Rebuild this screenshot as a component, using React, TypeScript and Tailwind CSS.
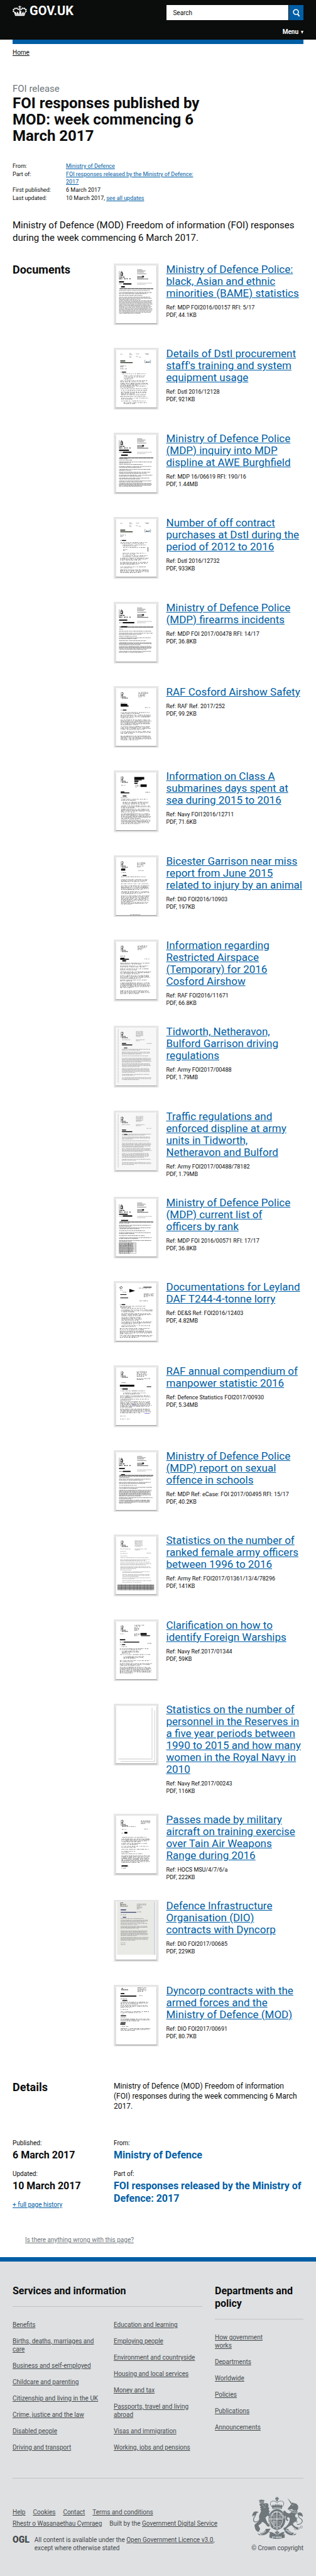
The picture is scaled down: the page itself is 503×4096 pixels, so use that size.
import React from "react";

type Bar = [x: number, y: number, w: number, h: number];
type Block = [x: number, y: number, w: number, lines: number, pitch?: number];
type Style = "typed" | "broken" | "fine";

interface Art {
  style: Style;
  paper?: string;
  bars?: Bar[];
  blocks?: Block[];
  extra?: React.ReactNode;
}

interface Doc {
  title: string;
  reference: string;
  size: string;
  art: Art;
}

function makeRandom(seed: number) {
  let s = seed * 7919 + 17;
  return () => {
    s = (s * 16807) % 2147483647;
    return s / 2147483647;
  };
}

function textPath(blocks: Block[], style: Style, seed: number) {
  const rnd = makeRandom(seed);
  const gap = style === "broken" ? 2.2 : 0.8;
  let d = "";
  for (const [x, y, w, lines, pitch = 2.3] of blocks) {
    for (let i = 0; i < lines; i++) {
      const ragged = i === lines - 1 && lines > 1 ? 0.35 + rnd() * 0.5 : 0.93 + rnd() * 0.07;
      const end = x + w * ragged;
      let cx = x;
      while (cx < end) {
        const word = Math.min(end - cx, 0.8 + rnd() * (style === "broken" ? 3 : 4.5));
        d += `M${cx.toFixed(1)} ${(y + i * pitch).toFixed(1)}h${word.toFixed(1)}`;
        cx += word + 0.4 + rnd() * gap;
      }
    }
  }
  return d;
}

const inkWidth: Record<Style, number> = { typed: 1, broken: 0.85, fine: 0.6 };
const inkOpacity: Record<Style, number> = { typed: 0.72, broken: 0.9, fine: 0.75 };

function Thumbnail({ art, seed }: { art: Art; seed: number }) {
  return (
    <svg viewBox="0 0 109 150" className="block h-auto w-full" aria-hidden="true">
      <rect width="109" height="150" fill="#e6e6e6" />
      <rect x="4" y="7" width="101" height="140" fill="#000" opacity="0.1" />
      <rect x="5" y="6.5" width="99" height="140" fill="#000" opacity="0.3" />
      <rect x="5" y="5" width="99" height="140" fill={art.paper ?? "#fff"} />
      {art.extra}
      <path
        d={textPath(art.blocks ?? [], art.style, seed)}
        stroke="#000"
        strokeWidth={inkWidth[art.style]}
        opacity={inkOpacity[art.style]}
      />
      {art.bars?.map(([x, y, w, h], i) => (
        <rect key={i} x={x} y={y} width={w} height={h} fill="#000" />
      ))}
    </svg>
  );
}

const policeHeader = (
  <g>
    <path d="M13.5 18v21" stroke="#555" strokeWidth="0.8" />
    <path
      d="M17 21l2-2 2 2M16 25c0-3 6-3 6 0s-6 4-5 1M16 29h7M18 22h3v7"
      fill="none"
      stroke="#111"
      strokeWidth="1.4"
    />
    <path d="M15 33h2m1 0h3m2 0h3M14 37h4m1 0h2m4 0h4m2 0h3m4 0h3" stroke="#000" strokeWidth="1.6" />
    <path d="M57 15h12M57 18h20M57 21h16M57 25h22" stroke="#333" strokeWidth="1" strokeDasharray="3 0.4" />
    <path d="M57 31.5h12M57 34.5h15M57 37.5h27" stroke="#222" strokeWidth="1.2" strokeDasharray="4 0.3" />
    <rect x="69" y="30" width="4.5" height="3" />
    <path d="M57 47.5h36M57 50.5h20" stroke="#777" strokeWidth="0.8" strokeDasharray="3 0.5" />
  </g>
);

const police = (nameBars: Bar[], blocks: Block[], extra?: React.ReactNode): Art => ({
  style: "typed",
  bars: nameBars,
  blocks,
  extra: (
    <>
      {policeHeader}
      <path d="M14 61h82" stroke="#111" strokeWidth="1.5" strokeDasharray="9 0.4" />
      {extra}
    </>
  ),
});

const dstlHeader = (
  <g>
    <path
      d="M16 15.500h5M38 14h5m-5 2.500h7M54 15h8M76 14.500h9m-6 1.500h6M38 21h4m-3 2.500h4M54 21h5m2 2h5"
      stroke="#555"
      strokeWidth="0.9"
      strokeDasharray="2 0.7"
    />
    <path d="M77 30h-1.500v7H77M88 30h1.500v7H88" fill="none" stroke="#555" strokeWidth="0.7" />
    <text x="77.500" y="36" fontSize="6" fontWeight="700" fill="#1d5060" fontFamily="Roboto, sans-serif">
      dstl
    </text>
    <path d="M16 32h12M16 36h30" stroke="#15200f" strokeWidth="2" />
  </g>
);

const crestHeader = (
  <g stroke="#000" fill="none">
    <path d="M18 15v14" strokeWidth="0.6" />
    <path d="M19 17l2-2 2 2-1 4h-3M19 23h4" strokeWidth="1.2" />
    <path d="M20 26h9M20 29h15" strokeWidth="1.3" strokeDasharray="3 0.7" />
  </g>
);

const grainyScan = (
  <g>
    <rect x="5" y="5" width="99" height="140" fill="#f7f7f7" />
    <path d="M11 8v130" stroke="#ccc" strokeWidth="1.5" strokeDasharray="7 0.8" />
    <path d="M8 20v115" stroke="#eee" strokeWidth="1" />
    {crestHeader}
  </g>
);

const garrisonBlocks: Block[] = [
  [54, 14, 18, 6, 2.4],
  [20, 34, 20, 1],
  [54, 34, 22, 2, 2.5],
  [80, 43, 12, 1],
  [20, 57, 72, 2],
  [20, 64, 70, 3],
  [20, 73, 66, 1],
  [20, 79, 72, 5],
  [20, 92, 72, 4],
  [20, 104, 68, 5],
  [20, 118, 70, 2],
  [20, 126, 72, 3],
];

const docs: Doc[] = [
  {
    title: "Ministry of Defence Police: black, Asian and ethnic minorities (BAME) statistics",
    reference: "MDP FOI2016/00157 RFI: 5/17",
    size: "PDF, 44.1KB",
    art: police(
      [[13, 43, 12, 3], [23, 48, 20, 3], [18, 55, 9, 3]],
      [[13, 49, 8, 1], [13, 65.5, 76, 1], [13, 70.5, 82, 2], [13, 77, 60, 1], [13, 81.5, 80, 3, 2.8], [13, 90, 82, 12, 2.8]],
    ),
  },
  {
    title: "Details of Dstl procurement staff's training and system equipment usage",
    reference: "Dstl 2016/12128",
    size: "PDF, 921KB",
    art: {
      style: "broken",
      extra: dstlHeader,
      bars: [[20, 58, 10, 2]],
      blocks: [
        [16, 44, 16, 2], [16, 51, 17, 1], [16, 59, 4, 1], [20, 63, 60, 1], [25, 68, 52, 3, 2.7], [24, 76, 20, 1],
        [16, 80, 70, 2], [16, 86, 70, 3], [16, 93, 68, 2], [16, 99, 66, 1], [18, 103, 66, 1], [18, 107, 66, 3],
        [18, 114, 62, 1], [16, 118, 66, 1], [18, 122, 68, 2], [18, 129, 62, 1], [24, 133, 58, 2],
      ],
    },
  },
  {
    title: "Ministry of Defence Police (MDP) inquiry into MDP displine at AWE Burghfield",
    reference: "MDP 16/06619 RFI: 190/16",
    size: "PDF, 1.44MB",
    art: police(
      [[13, 41, 24, 3], [22, 46, 21, 3], [18, 53, 16, 3]],
      [
        [13, 47, 8, 1], [13, 63, 22, 1], [13, 66.5, 34, 1], [13, 71, 82, 2], [13, 77, 60, 1], [13, 82, 80, 2],
        [13, 89, 80, 2], [13, 96, 80, 2], [13, 103, 82, 2], [13, 110, 78, 2], [13, 117, 82, 2], [13, 123, 82, 4],
      ],
    ),
  },
  {
    title: "Number of off contract purchases at Dstl during the period of 2012 to 2016",
    reference: "Dstl 2016/12732",
    size: "PDF, 933KB",
    art: {
      style: "broken",
      extra: (
        <>
          {dstlHeader}
          <path d="M83 73v11" stroke="#333" strokeWidth="1.2" />
        </>
      ),
      bars: [[20, 56, 10, 2]],
      blocks: [
        [16, 44, 14, 2, 3], [16, 57, 4, 1], [17, 62, 66, 2], [22, 68, 60, 2], [23, 74, 56, 1], [23, 79, 10, 2],
        [22, 88, 60, 2], [22, 94, 66, 2], [16, 100, 70, 3], [16, 110, 70, 3], [16, 121, 66, 2], [16, 128, 70, 4],
      ],
    },
  },
  {
    title: "Ministry of Defence Police (MDP) firearms incidents",
    reference: "MDP FOI 2017/00478 RFI: 14/17",
    size: "PDF, 36.8KB",
    art: police(
      [[13, 43, 20, 2.5], [22, 49, 28, 3], [18, 59, 15, 2.5]],
      [
        [13, 50.5, 8, 1], [13, 66, 10, 1], [13, 71, 80, 1], [13, 76, 82, 2], [13, 83, 44, 1], [13, 87, 80, 2],
        [13, 94, 66, 1], [13, 99, 80, 3], [13, 108, 80, 4], [13, 120, 82, 2],
      ],
    ),
  },
  {
    title: "RAF Cosford Airshow Safety",
    reference: "RAF Ref. 2017/252",
    size: "PDF, 99.2KB",
    art: {
      style: "broken",
      extra: crestHeader,
      bars: [[17, 43, 16, 4], [17, 47, 19, 2.5], [22, 57, 9, 2]],
      blocks: [
        [60, 15, 24, 3], [60, 22, 16, 3], [17, 41, 12, 1], [76, 52, 12, 1], [17, 58, 4, 1], [17, 64, 72, 2],
        [17, 70, 74, 4], [17, 82, 76, 6], [17, 98, 74, 4], [17, 110, 76, 3], [17, 121, 76, 5],
      ],
    },
  },
  {
    title: "Information on Class A submarines days spent at sea during 2015 to 2016",
    reference: "Navy FOI12016/12711",
    size: "PDF, 71.6KB",
    art: {
      style: "broken",
      extra: crestHeader,
      bars: [[50, 16, 24, 6], [50, 22, 18, 2], [50, 25, 10, 3], [50, 30, 8, 2.5], [65, 34, 15, 6], [17, 51, 9, 2], [17, 53.5, 21, 2], [22, 61, 9, 2]],
      blocks: [
        [18, 36, 12, 1], [53, 36, 10, 3], [77, 53, 12, 1], [17, 66, 16, 1], [18, 70, 70, 2], [22, 77, 66, 3],
        [18, 86, 72, 3], [18, 94, 72, 4], [18, 105, 74, 6], [18, 120, 72, 5],
      ],
    },
  },
  {
    title: "Bicester Garrison near miss report from June 2015 related to injury by an animal",
    reference: "DIO FOI2016/10903",
    size: "PDF, 197KB",
    art: {
      style: "broken",
      extra: crestHeader,
      bars: [[18, 32, 10, 5], [22, 48, 9, 2]],
      blocks: [
        [57, 18, 20, 3], [57, 26, 16, 2], [60, 37, 14, 1], [18, 42, 12, 1], [18, 52, 62, 1], [18, 59, 68, 3],
        [18, 69, 66, 1], [18, 74, 68, 5], [18, 88, 72, 3], [18, 98, 70, 7], [18, 114, 68, 3], [40, 144, 26, 1],
      ],
    },
  },
  {
    title: "Information regarding Restricted Airspace (Temporary) for 2016 Cosford Airshow",
    reference: "RAF FOI2016/11671",
    size: "PDF, 66.8KB",
    art: {
      style: "broken",
      extra: crestHeader,
      bars: [[16, 44, 10, 4], [16, 46.5, 21, 2.5], [21, 50, 9, 3]],
      blocks: [
        [58, 15, 24, 3], [58, 22, 13, 2], [16, 40, 12, 1], [75, 47, 12, 1], [16, 57, 72, 2], [16, 64, 72, 2],
        [16, 71, 74, 2], [16, 78, 74, 3], [16, 87, 74, 4], [16, 98, 66, 2], [16, 105, 74, 6], [16, 124, 72, 4],
      ],
    },
  },
  {
    title: "Tidworth, Netheravon, Bulford Garrison driving regulations",
    reference: "Army FOI2017/00488",
    size: "PDF, 1.79MB",
    art: { style: "fine", extra: grainyScan, bars: [[20, 42, 10, 2], [20, 45.5, 25, 2], [25, 53, 8, 1.5]], blocks: garrisonBlocks },
  },
  {
    title: "Traffic regulations and enforced displine at army units in Tidworth, Netheravon and Bulford",
    reference: "Army FOI2017/00488/78182",
    size: "PDF, 1.79MB",
    art: { style: "fine", extra: grainyScan, bars: [[20, 46, 10, 2], [20, 50, 25, 2], [25, 57, 8, 1.5]], blocks: garrisonBlocks },
  },
  {
    title: "Ministry of Defence Police (MDP) current list of officers\u00a0by rank",
    reference: "MDP FOI 2016/00571 RFI: 17/17",
    size: "PDF, 36.8KB",
    art: police(
      [[13, 41, 21, 2.5], [22, 45, 23, 3], [18, 56, 17, 2.5]],
      [
        [13, 47, 8, 1], [13, 64, 26, 1], [13, 69, 82, 2], [13, 75, 82, 2], [13, 82, 66, 1], [13, 87, 80, 2],
        [13, 94, 64, 1], [13, 99, 82, 2], [13, 106, 82, 2], [14, 113, 34, 10, 2.6],
      ],
      <path
        d="M13 111h41v26H13zM36 111v26M13 114h41M13 117h41M13 120h41M13 123h41M13 126h41M13 129h41M13 132h41"
        fill="none"
        stroke="#444"
        strokeWidth="0.6"
      />,
    ),
  },
  {
    title: "Documentations for Leyland DAF T244-4-tonne lorry",
    reference: "DE&S Ref: FOI2016/12403",
    size: "PDF, 4.82MB",
    art: {
      style: "broken",
      extra: (
        <>
          <path d="M15 15l4-2 2 3-3 3-3-2z" fill="none" stroke="#000" strokeWidth="1" />
          <path d="M38 19l14 4.500-14 4z" />
        </>
      ),
      bars: [[72, 14, 20, 1.5], [16, 32, 15, 1.5], [16, 40, 19, 1.5], [19, 56, 9, 2]],
      blocks: [
        [61, 17, 30, 1], [16, 22, 8, 1], [22, 27, 12, 1], [73, 31, 24, 4], [62, 48, 24, 1], [15, 57, 4, 1],
        [16, 61, 62, 2], [19, 66, 60, 1], [19, 70, 76, 3], [19, 79, 76, 3], [19, 88, 50, 4], [19, 99, 76, 3],
        [19, 108, 74, 2], [15, 115, 78, 2], [15, 121, 80, 4], [15, 132, 80, 3],
      ],
    },
  },
  {
    title: "RAF annual compendium of manpower statistic 2016",
    reference: "Defence Statistics FOI2017/00930",
    size: "PDF, 5.34MB",
    art: {
      style: "broken",
      extra: (
        <>
          {crestHeader}
          <path d="M46 96h7M75 116.500h12" stroke="#2323d0" strokeWidth="1" strokeDasharray="3 0.500" />
        </>
      ),
      bars: [[15, 47, 35, 4.5], [21, 56, 13, 2.5], [80, 51, 11, 1.5]],
      blocks: [
        [56, 15, 26, 6], [56, 32, 34, 2], [18, 42, 14, 1], [17, 57, 4, 1], [17, 62, 62, 1], [23, 67, 58, 2],
        [16, 74, 76, 3], [16, 82, 74, 2], [16, 88, 76, 7], [16, 106, 76, 5], [16, 123, 13, 1], [16, 130, 24, 1],
      ],
    },
  },
  {
    title: "Ministry of Defence Police (MDP) report on sexual offence in schools",
    reference: "MDP Ref: eCase: FOI 2017/00495 RFI: 15/17",
    size: "PDF, 40.2KB",
    art: police(
      [[13, 43, 14, 2.5], [22, 50, 19, 2.5], [18, 58, 9, 2]],
      [
        [13, 51, 8, 1], [13, 63.5, 82, 1], [13, 66, 26, 1], [13, 70, 82, 2], [13, 78, 82, 2], [13, 85, 44, 1],
        [13, 90, 82, 2], [13, 97, 80, 7], [13, 115, 82, 2], [13, 121, 80, 4],
      ],
    ),
  },
  {
    title: "Statistics on the number of ranked female army officers between 1996 to 2016",
    reference: "Army Ref: FOI2017/01361/13/4/78296",
    size: "PDF, 141KB",
    art: {
      style: "fine",
      extra: (
        <>
          {crestHeader}
          <rect x="9" y="121" width="89" height="14" fill="#aaa" />
          <path d="M9 124h89M9 128h89M9 131h89" stroke="#333" strokeWidth="0.800" />
          <path d="M19 121v14M28 121v14M39 121v14M49 121v14M57 121v14M64 121v14M74 121v14M82 121v14M90 121v14" stroke="#333" strokeWidth="0.600" />
        </>
      ),
      blocks: [
        [51, 15, 20, 7], [16, 35, 26, 1], [51, 35, 30, 2], [16, 41, 14, 1], [80, 45, 12, 1], [16, 46, 18, 1],
        [16, 52, 18, 1], [16, 56, 72, 1], [16, 61, 76, 2], [16, 67, 76, 1], [16, 71, 76, 2], [16, 78, 76, 3],
        [16, 86, 28, 1], [21, 90, 70, 2], [21, 97, 70, 3], [21, 105, 70, 2], [21, 112, 70, 1], [21, 116, 48, 1],
      ],
    },
  },
  {
    title: "Clarification on how to identify Foreign Warships",
    reference: "Navy Ref.2017/01344",
    size: "PDF, 59KB",
    art: {
      style: "broken",
      extra: crestHeader,
      bars: [[65, 33, 15, 4.5], [66, 38.5, 22, 1.8], [15, 48, 13, 2.5], [24, 54, 38, 2], [20, 60, 8, 2]],
      blocks: [
        [50, 14, 26, 2], [50, 20, 12, 4], [50, 35, 14, 3], [16, 35, 8, 1], [15, 55, 8, 1], [82, 58, 11, 1],
        [15, 61, 4, 1], [18, 66, 16, 1], [15, 71, 70, 2], [20, 77, 42, 3], [16, 85, 76, 1], [24, 90, 50, 3],
        [15, 100, 78, 2], [15, 107, 78, 3], [15, 116, 78, 7],
      ],
    },
  },
  {
    title: "Statistics on the number of personnel in the Reserves in a five year periods between 1990 to 2015 and how many women in the Royal Navy in 2010",
    reference: "Navy Ref.2017/00243",
    size: "PDF, 116KB",
    art: {
      style: "fine",
      extra: <path d="M93 10v124H11M99.500 16v124H17" fill="none" stroke="#e0e0e0" strokeWidth="2.500" />,
    },
  },
  {
    title: "Passes made by military aircraft on training exercise over Tain Air Weapons Range during 2016",
    reference: "HOCS MSU/4/7/6/a",
    size: "PDF, 222KB",
    art: {
      style: "broken",
      extra: crestHeader,
      bars: [[26, 44, 7, 4], [19, 125, 15, 2.5]],
      blocks: [
        [66, 17, 24, 4], [20, 31, 34, 1], [20, 38, 10, 1], [74, 37, 9, 1], [19, 47, 6, 1], [21, 57, 62, 1],
        [19, 61, 70, 4], [19, 72, 68, 2], [19, 79, 70, 2], [19, 86, 68, 1], [19, 91, 36, 2], [19, 97, 52, 1],
        [19, 102, 70, 8], [19, 128, 18, 1], [19, 132, 12, 1],
      ],
    },
  },
  {
    title: "Defence Infrastructure Organisation (DIO) contracts\u00a0with Dyncorp",
    reference: "DIO FOI2017/00685",
    size: "PDF, 229KB",
    art: {
      style: "fine",
      extra: (
        <>
          <rect x="8" y="5" width="93" height="128" fill="#e9eae6" />
          <rect x="98" y="5" width="3" height="128" fill="#ccd3da" />
          <path d="M17 6v10M19 7h4M18 11h12M18 15h16" stroke="#333" strokeWidth="1.200" strokeDasharray="4 0.500" />
          <path d="M17 24h13M17 30h38" stroke="#39406e" strokeWidth="2" />
          <path d="M22 42h8" stroke="#39406e" strokeWidth="2" />
        </>
      ),
      blocks: [
        [56, 10, 24, 3], [56, 17, 14, 3], [57, 29, 11, 1], [17, 36, 14, 1], [17, 45, 58, 1], [17, 49, 68, 3],
        [17, 57, 68, 2], [17, 64, 68, 3], [17, 75, 68, 6], [17, 91, 68, 4], [17, 104, 12, 1], [17, 108, 12, 1],
      ],
    },
  },
  {
    title: "Dyncorp contracts with the armed forces and the Ministry of Defence (MOD)",
    reference: "DIO FOI2017/00691",
    size: "PDF, 80.7KB",
    art: {
      style: "broken",
      extra: <path d="M19 9h4M18 12h17" stroke="#000" strokeWidth="1.300" strokeDasharray="4 0.500" />,
      bars: [[17, 20, 9, 2.5], [16, 26, 39, 2.5], [21, 37, 12, 2], [17, 74, 13, 2], [17, 91, 12, 2], [16, 94, 12, 2.5]],
      blocks: [
        [58, 7, 22, 5], [62, 26, 9, 1], [17, 34, 16, 1], [17, 42, 68, 3], [17, 50, 70, 3], [17, 60, 18, 1],
        [17, 65, 70, 2], [20, 71, 7, 1], [17, 79, 14, 1], [17, 83, 74, 3], [17, 101, 20, 1], [17, 106, 74, 3],
      ],
    },
  },
];

function CrownLogo() {
  return (
    <svg viewBox="17 23 112 82" className="h-[17px] w-[23px]" fill="#fff" aria-hidden="true">
      <path d="M68 24h10l-3 6 8-2v8l-8-2 3 7h-10l3-7-8 2v-8l8 2z" />
      <path d="M27 70l10 32h72l10-32-8 3-5 12-5-6 3-10-8 2-7 15-6-9 4-9-14-6-6 10 4 6-6 8-8-15-8-2 3 10-5 6-5-12z" />
      <g>
        <circle cx="24" cy="66" r="6" />
        <circle cx="25" cy="53" r="6" />
        <circle cx="36" cy="44" r="6" />
        <circle cx="50" cy="43" r="6" />
        <circle cx="61" cy="50" r="6" />
        <circle cx="84" cy="50" r="6" />
        <circle cx="96" cy="43" r="6" />
        <circle cx="109" cy="44" r="6" />
        <circle cx="120" cy="53" r="6" />
        <circle cx="121" cy="66" r="6" />
        <path d="M69 42h8v20h-8z" />
      </g>
      <path d="M37 93q36-7 71 0" fill="none" stroke="#0b0c0c" strokeWidth="2" />
    </svg>
  );
}

function RoyalArms() {
  const ink = "#6f777b";
  const paper = "#dee0e2";
  return (
    <svg viewBox="38 28 377 309" className="h-[67px] w-[82px]" fill={ink} aria-hidden="true">
      {/* lion */}
      <path d="M89 50l6 5 3-7 5 6 4-9 6 9 5-6 4 7 7-5-4 24H95z" />
      <path d="M96 66h30" stroke={paper} strokeWidth="3" />
      <path d="M93 80q15-8 36-3l22-2 9 13-3 14 8 10-5 11 8 13-6 11 8 9-9 3q8 6 6 12l-16-4-14 14 6 19 10 20 16 15-4 13-16-4-9-14-19-15-9-3-7 12-19 14 3 9 8 13-1 13-8-1 7 10-13 3q-20-9-24-36l-2-14 8-9 17-13 10-21-2-22 7-17 9-20-6-12 6-8-9-6 7-8-8-8z" />
      <path d="M112 88l9 3m12-2l8-3m-19 15l8 6 7-4" stroke={paper} strokeWidth="3" fill="none" />
      <path d="M82 207q-22 14-32-3-4-16 8-30 9-13 8-25" fill="none" stroke={ink} strokeWidth="6" />
      <path d="M40 175q-2-25 15-38l14-2 18 5-15 9-6 14-16 3z" />
      {/* crown */}
      <path d="M214 30h16l-5 8 9-3v15l-9-4 5 14h-16l4-14-9 4V35l9 3z" />
      <path d="M184 102q-17-20-8-36 20-15 46 4 26-19 46-4 9 16-8 36" fill="none" stroke={ink} strokeWidth="5" strokeDasharray="6 2" />
      <path d="M184 96l9-11 7 10 9-14 8 13 5-17 6 17 8-13 8 14 8-10 9 11-4 22q-36-9-69 0z" />
      <path d="M191 111q32-8 63 0" fill="none" stroke={paper} strokeWidth="3" />
      {/* garter and shield */}
      <ellipse cx="221" cy="194" rx="62" ry="76" />
      <ellipse cx="221" cy="194" rx="45" ry="59" fill={paper} />
      <ellipse cx="221" cy="194" rx="41" ry="54" />
      <path id="garter" d="M182 242A49 62 0 1 1 260 242" fill="none" />
      <text fontSize="15" fontWeight="700" fill={paper} fontFamily="Roboto, sans-serif">
        <textPath href="#garter">HONI SOIT QUI MAL Y PENSE</textPath>
      </text>
      <path d="M221 140v108M180 191h82" stroke={paper} strokeWidth="5" />
      <path d="M190 162h24m-24 9h22m-20 9h20M233 163h22m-22 16h23M244 152v35M233 210h22m-22 11h18m-18 12h13" stroke={paper} strokeWidth="3" strokeDasharray="8 3" />
      <path d="M190 205h20q2 17-9 33-13-14-11-33zm6 0v22m8-22v26" fill="none" stroke={paper} strokeWidth="3" />
      <path d="M193 250l9 5m11 5h17m9-5l10-6" stroke={paper} strokeWidth="5" />
      {/* unicorn */}
      <path d="M297 36l36 40-9 5z" />
      <path d="M334 70l9 4 20 5 13 15 1 20-7 12 2 16-8 14-10 5 2 13 12 17-2 16-15 7-12 9 3 12 17 13 15 4 4 19-11-3-18-14-21-17-14 6-20 15-7 10-13 4-5-15 15-7 18-19 10-18 4-27-13-9-10 10 12 13-9 8-12-19 3-17-14-7-9-9 6-8-3-14 12-4 13 14 20 7 18-13 8-17-13-3-7 7-16-2-1-8 16-20 10-13z" />
      <path d="M314 120l10 10 4-8 8 12 6-9 9 12 6-9 8 9-3 10q-25-3-52-17z" stroke={paper} strokeWidth="3" />
      <circle cx="337" cy="89" r="3" fill={paper} />
      <path d="M369 232q35-2 38-24 1-13-18-23-14-11-9-30" fill="none" stroke={ink} strokeWidth="6" />
      <path d="M370 152q9-13 27-8 14 8 14 32-12-10-23-10-11-2-18-14z" />
      <g fill="none" stroke={ink} strokeWidth="3">
        <circle cx="346" cy="248" r="6" />
        <circle cx="357" cy="263" r="7" />
        <circle cx="382" cy="258" r="6" />
        <circle cx="400" cy="250" r="8" />
        <circle cx="366" cy="184" r="5" />
        <circle cx="366" cy="211" r="5" />
      </g>
      {/* ribbon */}
      <path d="M78 295l26 13q28-6 43-35l-12-9 41-2q-16 14-12 25 25-2 34 9 23 12 48 0 12-12 33-9 3-12-13-25l41 2-12 9q17 30 44 35l26-13-10 14-26 2q-32-5-48-25-15 8-9 21l-4 21q-49 17-95 0l-4-21q5-13-8-21-17 21-47 25l-25-2z" />
      <path d="M170 285q-15-1-9 17l11 8m101-25q15-1 9 17l-11 8" fill="none" stroke={paper} strokeWidth="3" />
      <path d="M166 302q55 25 112 0v26q-56 18-112 0z" />
      <path d="M96 294q28-3 46-30l20 7q-21 33-53 36zM348 294q-28-3-46-30l-22 7q21 33 55 36z" />
      <g fontSize="19" fontWeight="700" fill={paper} fontFamily="Roboto, sans-serif">
        <text x="185" y="331">ET MON</text>
        <text x="110" y="305" fontSize="18" transform="rotate(-35 110 305)">DIEU</text>
        <text x="283" y="275" fontSize="18" transform="rotate(32 283 275)">DROIT</text>
      </g>
      <path d="M222 271l7 10-3 7q9-10 13 1 1 9-11 9l4 10h-20l4-10q-12 0-11-9 4-11 13-1l-3-7z" stroke={paper} strokeWidth="2" />
    </svg>
  );
}

const serviceLinks = [
  ["Benefits", "Births, deaths, marriages and care", "Business and self-employed", "Childcare and parenting", "Citizenship and living in the UK", "Crime, justice and the law", "Disabled people", "Driving and transport"],
  ["Education and learning", "Employing people", "Environment and countryside", "Housing and local services", "Money and tax", "Passports, travel and living abroad", "Visas and immigration", "Working, jobs and pensions"],
];

const policyLinks = ["How government works", "Departments", "Worldwide", "Policies", "Publications", "Announcements"];

function LinkList({ items, className = "" }: { items: string[]; className?: string }) {
  return (
    <ul className={`flex flex-col gap-[13px] ${className}`}>
      {items.map((item) => (
        <li key={item}>
          <a href="#" className="underline">{item}</a>
        </li>
      ))}
    </ul>
  );
}

export default function App() {
  return (
    <div className="bg-white font-['Roboto',sans-serif] text-[#0b0c0c]">
      <header className="bg-[#0b0c0c] px-5 pt-2 pb-[6px] text-white">
        <div className="flex items-start justify-between">
          <a href="#" className="flex items-center gap-1 text-xl leading-[19px] font-bold">
            <CrownLogo />
            GOV.UK
          </a>
          <form className="flex w-[47%] gap-px" onSubmit={(e) => e.preventDefault()}>
            <input
              type="search"
              aria-label="Search"
              placeholder="Search"
              className="h-6 min-w-0 flex-1 bg-white px-[10px] text-[10px] text-[#0b0c0c] outline-none placeholder:text-[#0b0c0c]"
            />
            <button type="submit" aria-label="Search" className="flex h-6 w-[23px] items-center justify-center bg-[#005ea5]">
              <svg viewBox="0 0 12 14" className="h-[13px] w-[11px]" fill="none" stroke="#fff" aria-hidden="true">
                <circle cx="5.500" cy="5.500" r="4.300" strokeWidth="1.700" />
                <path d="M8.500 9l3 4" strokeWidth="2" />
              </svg>
            </button>
          </form>
        </div>
        <div className="mt-[13px] flex justify-end">
          <button type="button" className="flex items-center gap-1 text-[10px] leading-3 font-bold">
            Menu
            <svg viewBox="0 0 4 5" className="h-[5px] w-1" fill="#fff" aria-hidden="true">
              <path d="M0 0h4L2 5z" />
            </svg>
          </button>
        </div>
      </header>

      <div className="px-5">
        <div className="h-[7px] bg-[#005ea5]" />
        <nav className="pt-[7px] text-[10px] leading-[13px]">
          <a href="#" className="underline">Home</a>
        </nav>

        <main>
          <div className="mt-[41px] w-2/3">
            <p className="text-[15px] leading-5 text-[#6f777b]">FOI release</p>
            <h1 className="text-2xl leading-[26px] font-bold">
              FOI responses published by MOD: week commencing 6 March 2017
            </h1>
            <dl className="mt-[29px] grid grid-cols-[85px_1fr] gap-y-px text-[9px] leading-3">
              <dt>From:</dt>
              <dd><a href="#" className="text-[#005ea5] underline">Ministry of Defence</a></dd>
              <dt>Part of:</dt>
              <dd><a href="#" className="text-[#005ea5] underline">FOI responses released by the Ministry of Defence: 2017</a></dd>
              <dt>First published:</dt>
              <dd>6 March 2017</dd>
              <dt>Last updated:</dt>
              <dd>10 March 2017, <a href="#" className="text-[#005ea5] underline">see all updates</a></dd>
            </dl>
          </div>
          <p className="mt-[27px] text-[15px] leading-5">
            Ministry of Defence (MOD) Freedom of information (FOI) responses during the week commencing 6 March 2017.
          </p>

          <section className="mt-[31px] grid grid-cols-3 gap-x-5">
            <h2 className="text-lg leading-[19px] font-bold">Documents</h2>
            <ul className="col-span-2">
              {docs.map((doc, i) => (
                <li key={doc.reference} className="grid grid-cols-[109fr_333fr] items-start gap-x-3">
                  <div className="pb-9">
                    <Thumbnail art={doc.art} seed={i + 1} />
                  </div>
                  <div className="pb-[30px]">
                    <h3 className="text-[17px] leading-[19px]">
                      <a href="#" className="text-[#005ea5] underline">{doc.title}</a>
                    </h3>
                    <p className="mt-[7px] text-[9px] leading-3">Ref: {doc.reference}</p>
                    <p className="text-[9px] leading-3">{doc.size}</p>
                  </div>
                </li>
              ))}
            </ul>
          </section>

          <section className="mt-[19px] grid grid-cols-3 gap-x-5">
            <h2 className="text-lg leading-[19px] font-bold">Details</h2>
            <p className="col-span-2 text-xs leading-4">
              Ministry of Defence (MOD) Freedom of information (FOI)&nbsp;responses during the week commencing 6 March 2017.
            </p>
          </section>

          <section className="mt-[45px] grid grid-cols-3 gap-x-5 text-[10px] leading-3">
            <div>
              <p>Published:</p>
              <p className="mt-[3px] text-base leading-5 font-bold">6 March 2017</p>
              <p className="mt-[14px]">Updated:</p>
              <p className="mt-[3px] text-base leading-5 font-bold">10 March 2017</p>
              <p className="mt-[14px]"><a href="#" className="text-[#005ea5] underline">+ full page history</a></p>
            </div>
            <div className="col-span-2">
              <p>From:</p>
              <p className="mt-[3px] text-base leading-5 font-bold"><a href="#" className="text-[#005ea5]">Ministry of Defence</a></p>
              <p className="mt-[14px]">Part of:</p>
              <p className="mt-[3px] text-base leading-5 font-bold">
                <a href="#" className="text-[#005ea5]">FOI responses released by the Ministry of Defence: 2017</a>
              </p>
            </div>
          </section>
        </main>

        <p className="mt-11 pb-[21px] pl-5 text-[10px] leading-3">
          <a href="#" className="text-[#6f777b] underline">Is there anything wrong with this page?</a>
        </p>
      </div>

      <footer className="border-t-[7px] border-[#005ea5] bg-[#dee0e2] px-5 pt-[37px] pb-10 text-[10px] leading-[13px] text-[#454a4c]">
        <div className="grid grid-cols-3 gap-x-5 border-b border-[#bfc1c3] pb-[42px]">
          <div className="col-span-2">
            <h2 className="border-b border-[#bfc1c3] pb-[14px] text-base leading-5 font-bold text-[#0b0c0c]">Services and information</h2>
            <div className="mt-[22px] grid grid-cols-2 gap-x-5">
              <LinkList items={serviceLinks[0]} />
              <LinkList items={serviceLinks[1]} />
            </div>
          </div>
          <div>
            <h2 className="border-b border-[#bfc1c3] pb-[14px] text-base leading-5 font-bold text-[#0b0c0c]">Departments and policy</h2>
            <LinkList items={policyLinks} className="mt-[22px] pr-12" />
          </div>
        </div>
        <div className="flex items-end justify-between pt-[29px]">
          <div>
            <ul className="flex gap-3">
              {["Help", "Cookies", "Contact", "Terms and conditions"].map((item) => (
                <li key={item}><a href="#" className="underline">{item}</a></li>
              ))}
            </ul>
            <ul className="mt-[5px] flex gap-3">
              <li><a href="#" className="underline">Rhestr o Wasanaethau Cymraeg</a></li>
              <li>Built by the <a href="#" className="underline">Government Digital Service</a></li>
            </ul>
            <div className="mt-[13px] flex gap-2">
              <span className="text-sm leading-[13px] font-black">OGL</span>
              <p>
                All content is available under the <a href="#" className="underline">Open Government Licence v3.0</a>,
                <br />
                except where otherwise stated
              </p>
            </div>
          </div>
          <a href="#" className="flex flex-col items-end gap-2 whitespace-nowrap">
            <RoyalArms />
            © Crown copyright
          </a>
        </div>
      </footer>
    </div>
  );
}
